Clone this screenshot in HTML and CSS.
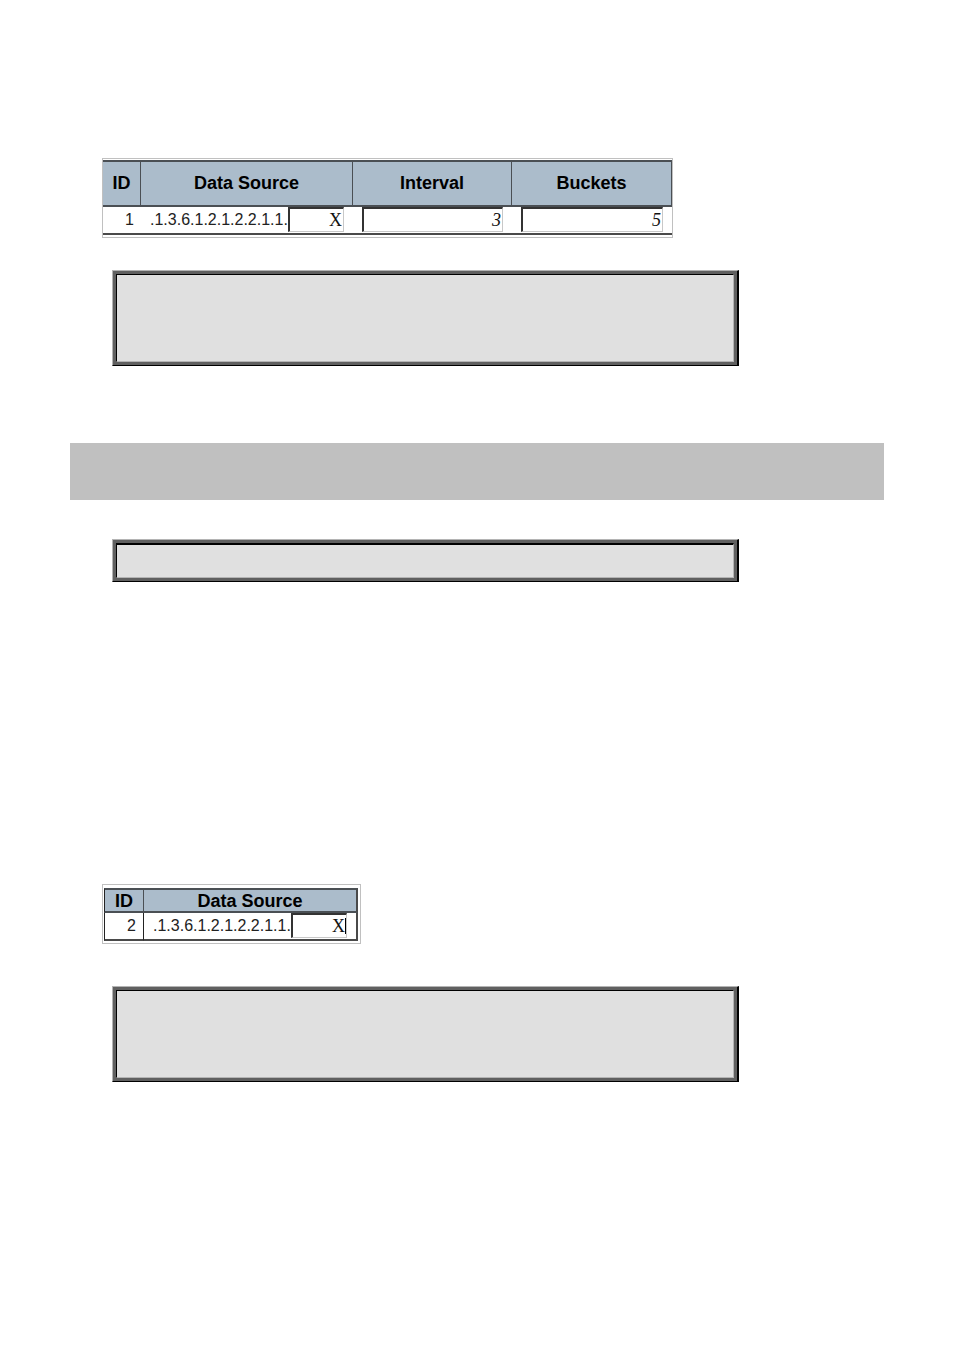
FILE: index.html
```html
<!DOCTYPE html>
<html lang="en">
<head>
<meta charset="utf-8">
<title>Data Source History</title>
<link rel="stylesheet" href="styles.css">
</head>
<body>
<main class="page">
  <div class="frame frame-wide">
    <table class="grid">
      <colgroup><col class="col-id"><col class="col-source"><col class="col-value"><col></colgroup>
      <thead>
        <tr><th>ID</th><th>Data Source</th><th>Interval</th><th>Buckets</th></tr>
      </thead>
      <tbody>
        <tr>
          <td class="id">1</td>
          <td><div class="cell"><label for="source1">.1.3.6.1.2.1.2.2.1.1.</label><input class="field short" id="source1" type="text" value="X"></div></td>
          <td><div class="cell"><input class="field italic" type="text" aria-label="Interval" value="3"></div></td>
          <td><div class="cell"><input class="field italic" type="text" aria-label="Buckets" value="5"></div></td>
        </tr>
      </tbody>
    </table>
  </div>
  <div class="box box-first"><div class="box-inner tall"></div></div>
  <div class="band"></div>
  <div class="box box-second"><div class="box-inner"></div></div>
  <div class="frame frame-narrow">
    <table class="grid ruled">
      <colgroup><col class="col-id"><col></colgroup>
      <thead>
        <tr><th>ID</th><th>Data Source</th></tr>
      </thead>
      <tbody>
        <tr>
          <td class="id">2</td>
          <td><div class="cell"><label for="source2">.1.3.6.1.2.1.2.2.1.1.</label><span class="caret"><input class="field short" id="source2" type="text" value="X"></span></div></td>
        </tr>
      </tbody>
    </table>
  </div>
  <div class="box box-third"><div class="box-inner tall"></div></div>
</main>
</body>
</html>
```
FILE: styles.css
```css
* { box-sizing: border-box; }

body {
  margin: 0;
  background: #fff;
  color: #222;
  font-family: "Liberation Sans", Arial, sans-serif;
}

.page {
  min-height: 100vh;
  padding: 158px 70px 80px;
}

.frame {
  margin-left: 32px;
  border: 1px solid #c0c0c0;
}

.frame-wide {
  max-width: 571px;
  padding: 1px 0 2px;
}

.frame-narrow {
  max-width: 259px;
  margin-top: 302px;
  padding: 3px 2px 2px 1px;
}

.grid {
  width: 100%;
  table-layout: fixed;
  border-collapse: separate;
  border-spacing: 0;
}

.col-id { width: 38px; }
.col-source { width: 212px; }
.col-value { width: 159px; }

.grid th {
  height: 47px;
  padding: 0 0 2px;
  border: solid #4a4f54;
  border-width: 2px 1px 2px 0;
  background: #abbccb;
  color: #000;
  font-size: 18px;
  line-height: 20px;
}

.grid td {
  height: 28px;
  padding: 0;
  border-bottom: 2px solid #4a4a4a;
  font-size: 16px;
  line-height: 26px;
}

.grid .id {
  padding-right: 7px;
  text-align: right;
}

.ruled .col-id { width: 40px; }
.ruled th {
  height: 25px;
  padding: 0;
}
.ruled td { border-right: 1px solid #222; }
.ruled th:first-child,
.ruled td:first-child { border-left: 1px solid #222; }
.ruled th:last-child,
.ruled td:last-child { border-right: 2px solid #4a4a4a; }

.cell {
  display: flex;
  height: 26px;
  padding: 0 9px 1px;
}

.field {
  display: block;
  width: 100%;
  min-width: 0;
  height: 25px;
  margin: 0;
  padding: 1px 1px 0;
  border: solid;
  border-width: 2px 1px 1px 2px;
  border-color: #333 #c8c8c8 #c8c8c8 #333;
  border-radius: 0;
  background: #fff;
  color: #111;
  font: 18px "Liberation Serif", "Times New Roman", serif;
  text-align: right;
}

.short { width: 56px; }
.italic { font-style: italic; }

.caret { position: relative; }

.caret::after {
  content: "";
  position: absolute;
  top: 5px;
  right: 1px;
  width: 1px;
  height: 16px;
  background: #000;
}

.box {
  max-width: 627px;
  margin-left: 42px;
  padding: 3px;
  border: solid;
  border-width: 1px 2px 1px 1px;
  border-color: #b4b4b4 #000 #000 #b4b4b4;
  background: #606060;
}

.box-inner {
  height: 35px;
  border: 1px solid;
  border-color: #000 #b4b4b4 #b4b4b4 #000;
  background: #e0e0e0;
}

.tall { height: 88px; }

.box-first { margin-top: 32px; }
.box-second { margin-top: 39px; }
.box-second .box-inner { border-top-width: 2px; }
.box-third { margin-top: 42px; }

.band {
  height: 57px;
  margin-top: 77px;
  background: #c0c0c0;
}
```
